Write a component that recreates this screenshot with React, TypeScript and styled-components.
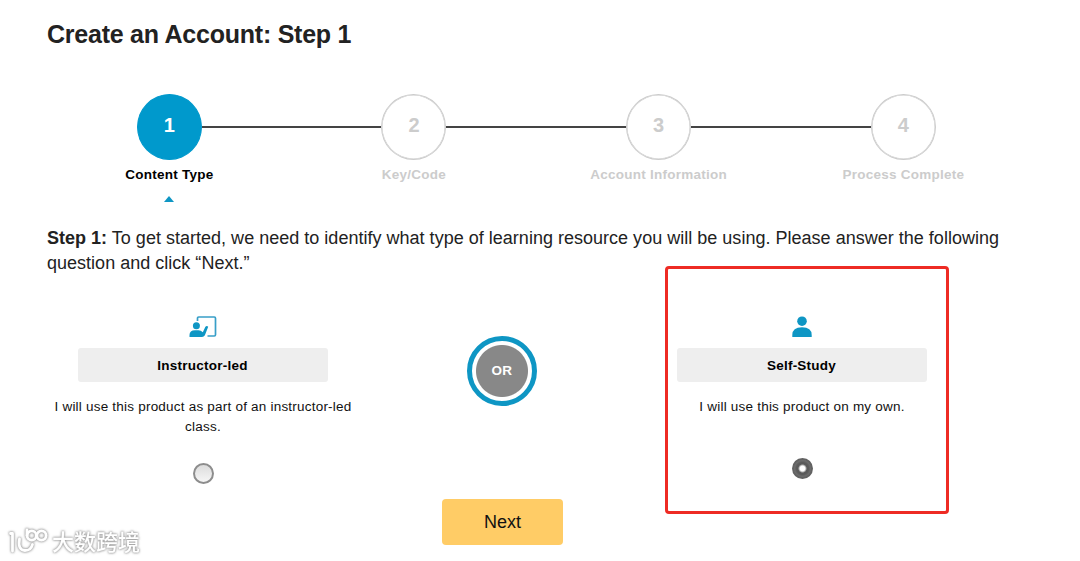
import styled, { createGlobalStyle } from "styled-components";
import { useState } from "react";

const GlobalStyle = createGlobalStyle`
  * {
    box-sizing: border-box;
  }
  body {
    margin: 0;
    background-color: #fff;
    color: #222;
    font-family: "Liberation Sans", Arial, sans-serif;
  }
`;

const Wrapper = styled.main`
  position: relative;
  width: 1080px;
  height: 561px;
  padding: 19px 54px 0 47px;
  overflow: hidden;
`;

const Title = styled.h1`
  margin: 0;
  padding-top: 1px;
  font-size: 25px;
  letter-spacing: -0.24px;
  line-height: 29px;
`;

const Steps = styled.ol`
  display: flex;
  width: 978.6px;
  margin: 45px 0 0;
  padding: 0;
  list-style: none;
`;

const StepItem = styled.li<{ $active: boolean }>`
  flex: 1;
  display: flex;
  flex-direction: column;
  align-items: center;
  color: ${(props) => (props.$active ? "#000" : "#ccc")};
`;

const StepTrack = styled.div`
  display: flex;
  align-items: center;
  width: 100%;
`;

const StepLine = styled.span<{ $hidden: boolean }>`
  flex: 1;
  height: 2px;
  background-color: ${(props) => (props.$hidden ? "transparent" : "#444")};
`;

const StepCircle = styled.div<{ $active: boolean }>`
  display: flex;
  justify-content: center;
  align-items: center;
  width: 65px;
  height: 66px;
  padding-bottom: 4px;
  border: 1px solid ${(props) => (props.$active ? "#0099cc" : "#ccc")};
  border-radius: 50%;
  background-color: ${(props) => (props.$active ? "#0099cc" : "#fff")};
  box-shadow: ${(props) => (props.$active ? "none" : "inset 0 0 0 0.5px #ccc")};
  color: ${(props) => (props.$active ? "#fff" : "#ccc")};
  font-size: 20px;
  font-weight: bold;
`;

const StepLabel = styled.span`
  margin-top: 5px;
  font-size: 13.49px;
  font-weight: bold;
  letter-spacing: 0.26px;
  line-height: 20px;
`;

const StepArrow = styled.span`
  margin-top: 11px;
  border-right: 5px solid transparent;
  border-bottom: 6px solid #0e96c4;
  border-left: 5px solid transparent;
`;

const Intro = styled.p`
  margin: 24px 0 0;
  font-size: 18px;
  letter-spacing: 0.015px;
  line-height: 25px;
`;

const Options = styled.div`
  display: grid;
  grid-template-columns: 311px 288px 311px;
  height: 223px;
`;

const Option = styled.label`
  position: relative;
  display: flex;
  flex-direction: column;
  align-items: center;
  padding-top: 39px;
  cursor: pointer;
`;

const OptionIcon = styled.svg`
  width: 28px;
  height: 24px;
  fill: #0e96c4;
`;

const OptionName = styled.span`
  width: 250px;
  height: 34px;
  margin-top: 9px;
  border-radius: 3px;
  background-color: #eee;
  color: #000;
  font-size: 13.49px;
  font-weight: bold;
  letter-spacing: 0.24px;
  line-height: 36px;
  text-align: center;
`;

const OptionText = styled.span`
  margin-top: 15px;
  padding-left: 1px;
  color: #111;
  font-size: 13.49px;
  letter-spacing: 0.22px;
  line-height: 20px;
  text-align: center;
`;

const RadioInput = styled.input`
  position: absolute;
  opacity: 0;
`;

const Radio = styled.span<{ $checked: boolean; $top: number }>`
  width: 21px;
  height: 21px;
  margin-top: ${(props) => props.$top}px;
  margin-left: 1px;
  border: 2px solid ${(props) => (props.$checked ? "#626262" : "#8d8d8d")};
  border-radius: 50%;
  background: ${(props) =>
    props.$checked
      ? "radial-gradient(circle, #fff 0 2.5px, #5a5a5a 4.5px, #5a5a5a 6px, #777 9px)"
      : "linear-gradient(#dcdcdc, #f6f6f6)"};
`;

const Highlight = styled.span`
  position: absolute;
  top: -10px;
  left: 19px;
  width: 284px;
  height: 248px;
  border: 3px solid #ee2b24;
  border-radius: 4px;
  pointer-events: none;
`;

const OrBadge = styled.div`
  display: flex;
  justify-content: center;
  align-items: center;
  justify-self: center;
  width: 70px;
  height: 70px;
  margin-top: 60px;
  padding-bottom: 2px;
  border: 5px solid #0e96c4;
  border-radius: 50%;
  background: radial-gradient(circle, #888 25.5px, #fff 26.5px);
  color: #fff;
  font-size: 13.49px;
  font-weight: bold;
  letter-spacing: 0.3px;
`;

const NextButton = styled.button`
  display: block;
  width: 121px;
  height: 46px;
  margin: 0 0 0 395px;
  padding: 0;
  border: none;
  border-radius: 4px;
  background-color: #ffcc66;
  color: #111;
  font-family: inherit;
  font-size: 18px;
  cursor: pointer;
`;

const Watermark = styled.div`
  position: absolute;
  bottom: 5px;
  left: 8px;
  display: flex;
  align-items: center;
  gap: 3px;
  color: #fff;
  font-family: "Noto Sans CJK SC", sans-serif;
  font-size: 22px;
  font-weight: 500;
  line-height: 30px;
  filter: drop-shadow(0 0 1px #999) drop-shadow(0 0 1px #bbb);

  span {
    position: relative;
    top: -1px;
  }
`;

const steps = ["Content Type", "Key/Code", "Account Information", "Process Complete"];

export default function App() {
  const [choice, setChoice] = useState("self");

  return (
    <>
      <GlobalStyle />
      <Wrapper>
        <Title>Create an Account: Step 1</Title>
        <Steps>
          {steps.map((step, i) => (
            <StepItem key={step} $active={i === 0}>
              <StepTrack>
                <StepLine $hidden={i === 0} />
                <StepCircle $active={i === 0}>{i + 1}</StepCircle>
                <StepLine $hidden={i === steps.length - 1} />
              </StepTrack>
              <StepLabel>{step}</StepLabel>
              {i === 0 && <StepArrow />}
            </StepItem>
          ))}
        </Steps>
        <Intro>
          <strong>Step 1:</strong> To get started, we need to identify what type
          of learning resource you will be using. Please answer the following
          question and click “Next.”
        </Intro>
        <Options>
          <Option>
            <RadioInput
              type="radio"
              name="type"
              checked={choice === "led"}
              onChange={() => setChoice("led")}
            />
            <OptionIcon viewBox="0 0 28 24">
              <path
                d="M8.5 6V3.2Q8.5 2 9.7 2H25.3Q26.5 2 26.5 3.2V19.8Q26.5 21 25.3 21H18.5"
                fill="none"
                stroke="#389fc8"
                strokeWidth="1.7"
              />
              <circle cx="7.4" cy="10.8" r="3.5" />
              <path d="M0.5 22V20Q0.5 15.2 6 15.2H9.5Q12 15.2 13.8 17.3L16.4 11.8Q17.8 10.3 19.2 11.8L15.9 20.3Q14.8 22 13 22Z" />
            </OptionIcon>
            <OptionName>Instructor-led</OptionName>
            <OptionText>
              I will use this product as part of an instructor-led class.
            </OptionText>
            <Radio $checked={choice === "led"} $top={26} />
          </Option>
          <OrBadge>OR</OrBadge>
          <Option>
            <RadioInput
              type="radio"
              name="type"
              checked={choice === "self"}
              onChange={() => setChoice("self")}
            />
            <OptionIcon viewBox="0 0 28 24">
              <circle cx="14" cy="6.2" r="4.8" />
              <path d="M4.3 22V20Q4.3 12.2 14 12.2Q23.7 12.2 23.7 20V22Z" />
            </OptionIcon>
            <OptionName>Self-Study</OptionName>
            <OptionText>I will use this product on my own.</OptionText>
            <Radio $checked={choice === "self"} $top={41} />
            <Highlight />
          </Option>
        </Options>
        <NextButton type="button">Next</NextButton>
        <Watermark>
          <svg
            width="41"
            height="28"
            viewBox="0 0 41 28"
            fill="none"
            stroke="#fff"
            strokeWidth="2.8"
            strokeLinecap="round"
            strokeLinejoin="round"
          >
            <path d="M2.5 6.5H4.5V24" />
            <path d="M11.5 12Q9.5 23 17 23.5Q23 23.5 24.5 17.5" />
            <path d="M19 3V8.5" />
            <circle cx="23.7" cy="8.5" r="4.6" />
            <circle cx="33.5" cy="8.5" r="4.6" />
          </svg>
          <span>大数跨境</span>
        </Watermark>
      </Wrapper>
    </>
  );
}
